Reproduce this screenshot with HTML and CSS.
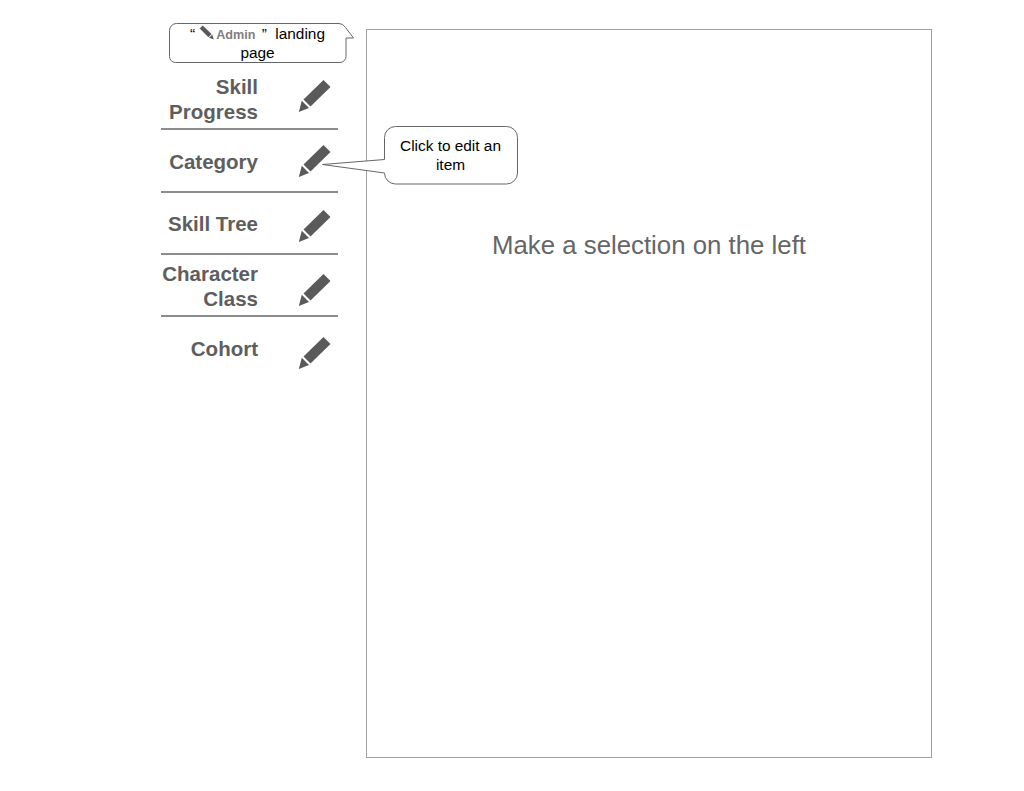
FILE: index.html
```html
<!DOCTYPE html>
<html lang="en">
<head>
<meta charset="utf-8">
<title>Admin landing page</title>
<link rel="stylesheet" href="styles.css">
</head>
<body>
<svg class="defs" width="0" height="0" aria-hidden="true">
  <symbol id="pencil" viewBox="0 0 34 34">
    <path d="M25.500 1 32.500 8 12.500 27.500 5.500 20.500Z"/>
    <path d="M3.800 21.800 11 29 .8 33Z"/>
  </symbol>
</svg>
<div class="page">
  <aside class="sidebar">
    <div class="row"><span class="label">Skill Progress</span><svg class="pencil"><use href="#pencil"/></svg></div>
    <div class="row"><span class="label">Category</span><svg class="pencil"><use href="#pencil"/></svg></div>
    <div class="row"><span class="label">Skill Tree</span><svg class="pencil"><use href="#pencil"/></svg></div>
    <div class="row"><span class="label">Character Class</span><svg class="pencil"><use href="#pencil"/></svg></div>
    <div class="row"><span class="label">Cohort</span><svg class="pencil"><use href="#pencil"/></svg></div>
  </aside>
  <main class="panel">
    <p class="prompt">Make a selection on the left</p>
  </main>
</div>

<div class="callout callout-admin">
  <svg class="callout-shape" width="190" height="44" viewBox="0 0 190 44">
    <path d="M7.500.5H170Q174 .5 176.500 4.500L184.500 15H177V33.500A6 6 0 0 1 171 39.500H6.500A6 6 0 0 1 .5 33.500V7.500A7 7 0 0 1 7.500.5Z"/>
  </svg>
  <p class="callout-text">“<svg class="mini-pencil"><use href="#pencil"/></svg><b class="admin">Admin</b> ” &nbsp;landing page</p>
</div>

<div class="callout callout-edit">
  <svg class="callout-shape" width="198" height="60" viewBox="0 0 198 60">
    <path d="M74.500.5H185.500A11 11 0 0 1 196.500 11.500V47A11 11 0 0 1 185.500 58H74.500A11 11 0 0 1 63.500 47L1.500 38.500 63.500 33.500V11.500A11 11 0 0 1 74.500.5Z"/>
  </svg>
  <p class="callout-text">Click to edit an item</p>
</div>
</body>
</html>
```
FILE: styles.css
```css
* { box-sizing: border-box; }

html, body {
  margin: 0;
  padding: 0;
  background: #fff;
}

body {
  position: relative;
  width: 1024px;
  height: 791px;
  overflow: hidden;
  font-family: "Liberation Sans", Arial, sans-serif;
}

.defs { position: absolute; }

.page {
  display: flex;
  gap: 28px;
  padding: 29px 0 0 161px;
}

.sidebar {
  width: 177px;
  padding-top: 39px;
}

.row {
  display: flex;
  align-items: center;
  height: 62.300px;
  border-bottom: 2px solid #8c8c8c;
}

.row:last-child { border-bottom-color: transparent; }

.label {
  width: 97px;
  padding-top: 2px;
  font-size: 20.500px;
  font-weight: 700;
  line-height: 25px;
  text-align: right;
  color: #5e5e5e;
}

.pencil {
  width: 34px;
  height: 34px;
  margin-left: 40px;
  fill: #5a5a5a;
}

.row:nth-child(1) .pencil { transform: translateY(-2px); }
.row:nth-child(2) .pencil { transform: translateY(1px); }
.row:nth-child(3) .pencil { transform: translateY(3px); }
.row:nth-child(4) .pencil { transform: translateY(5px); }
.row:nth-child(5) .pencil { transform: translateY(6px); }

.panel {
  width: 566px;
  height: 729px;
  border: 1px solid #a0a0a0;
}

.prompt {
  margin: 200px 0 0;
  font-size: 25.800px;
  line-height: 30px;
  text-align: center;
  color: #666;
}

.callout { position: absolute; }

.callout-shape {
  position: absolute;
  top: 0;
  left: 0;
  fill: #fff;
  stroke: #666;
  stroke-width: 1;
}

.callout-text {
  position: relative;
  margin: 0;
  font-size: 15.400px;
  line-height: 19px;
  text-align: center;
  color: #000;
}

.callout-admin {
  top: 23px;
  left: 169px;
  width: 190px;
  height: 44px;
}

.callout-admin .callout-text {
  width: 177px;
  padding: 1px 4px 0;
}

.mini-pencil {
  width: 15px;
  height: 15px;
  margin: -10px 2px 0 4px;
  vertical-align: -1px;
  fill: #5a5a5a;
  transform: scaleX(-1);
}

.admin {
  margin-right: 2px;
  font-size: 12.600px;
  line-height: 1;
  color: #808080;
}

.callout-edit {
  top: 126px;
  left: 321px;
  width: 198px;
  height: 60px;
}

.callout-edit .callout-text {
  width: 133px;
  margin-left: 63px;
  padding: 10px 8px 0;
}
```
